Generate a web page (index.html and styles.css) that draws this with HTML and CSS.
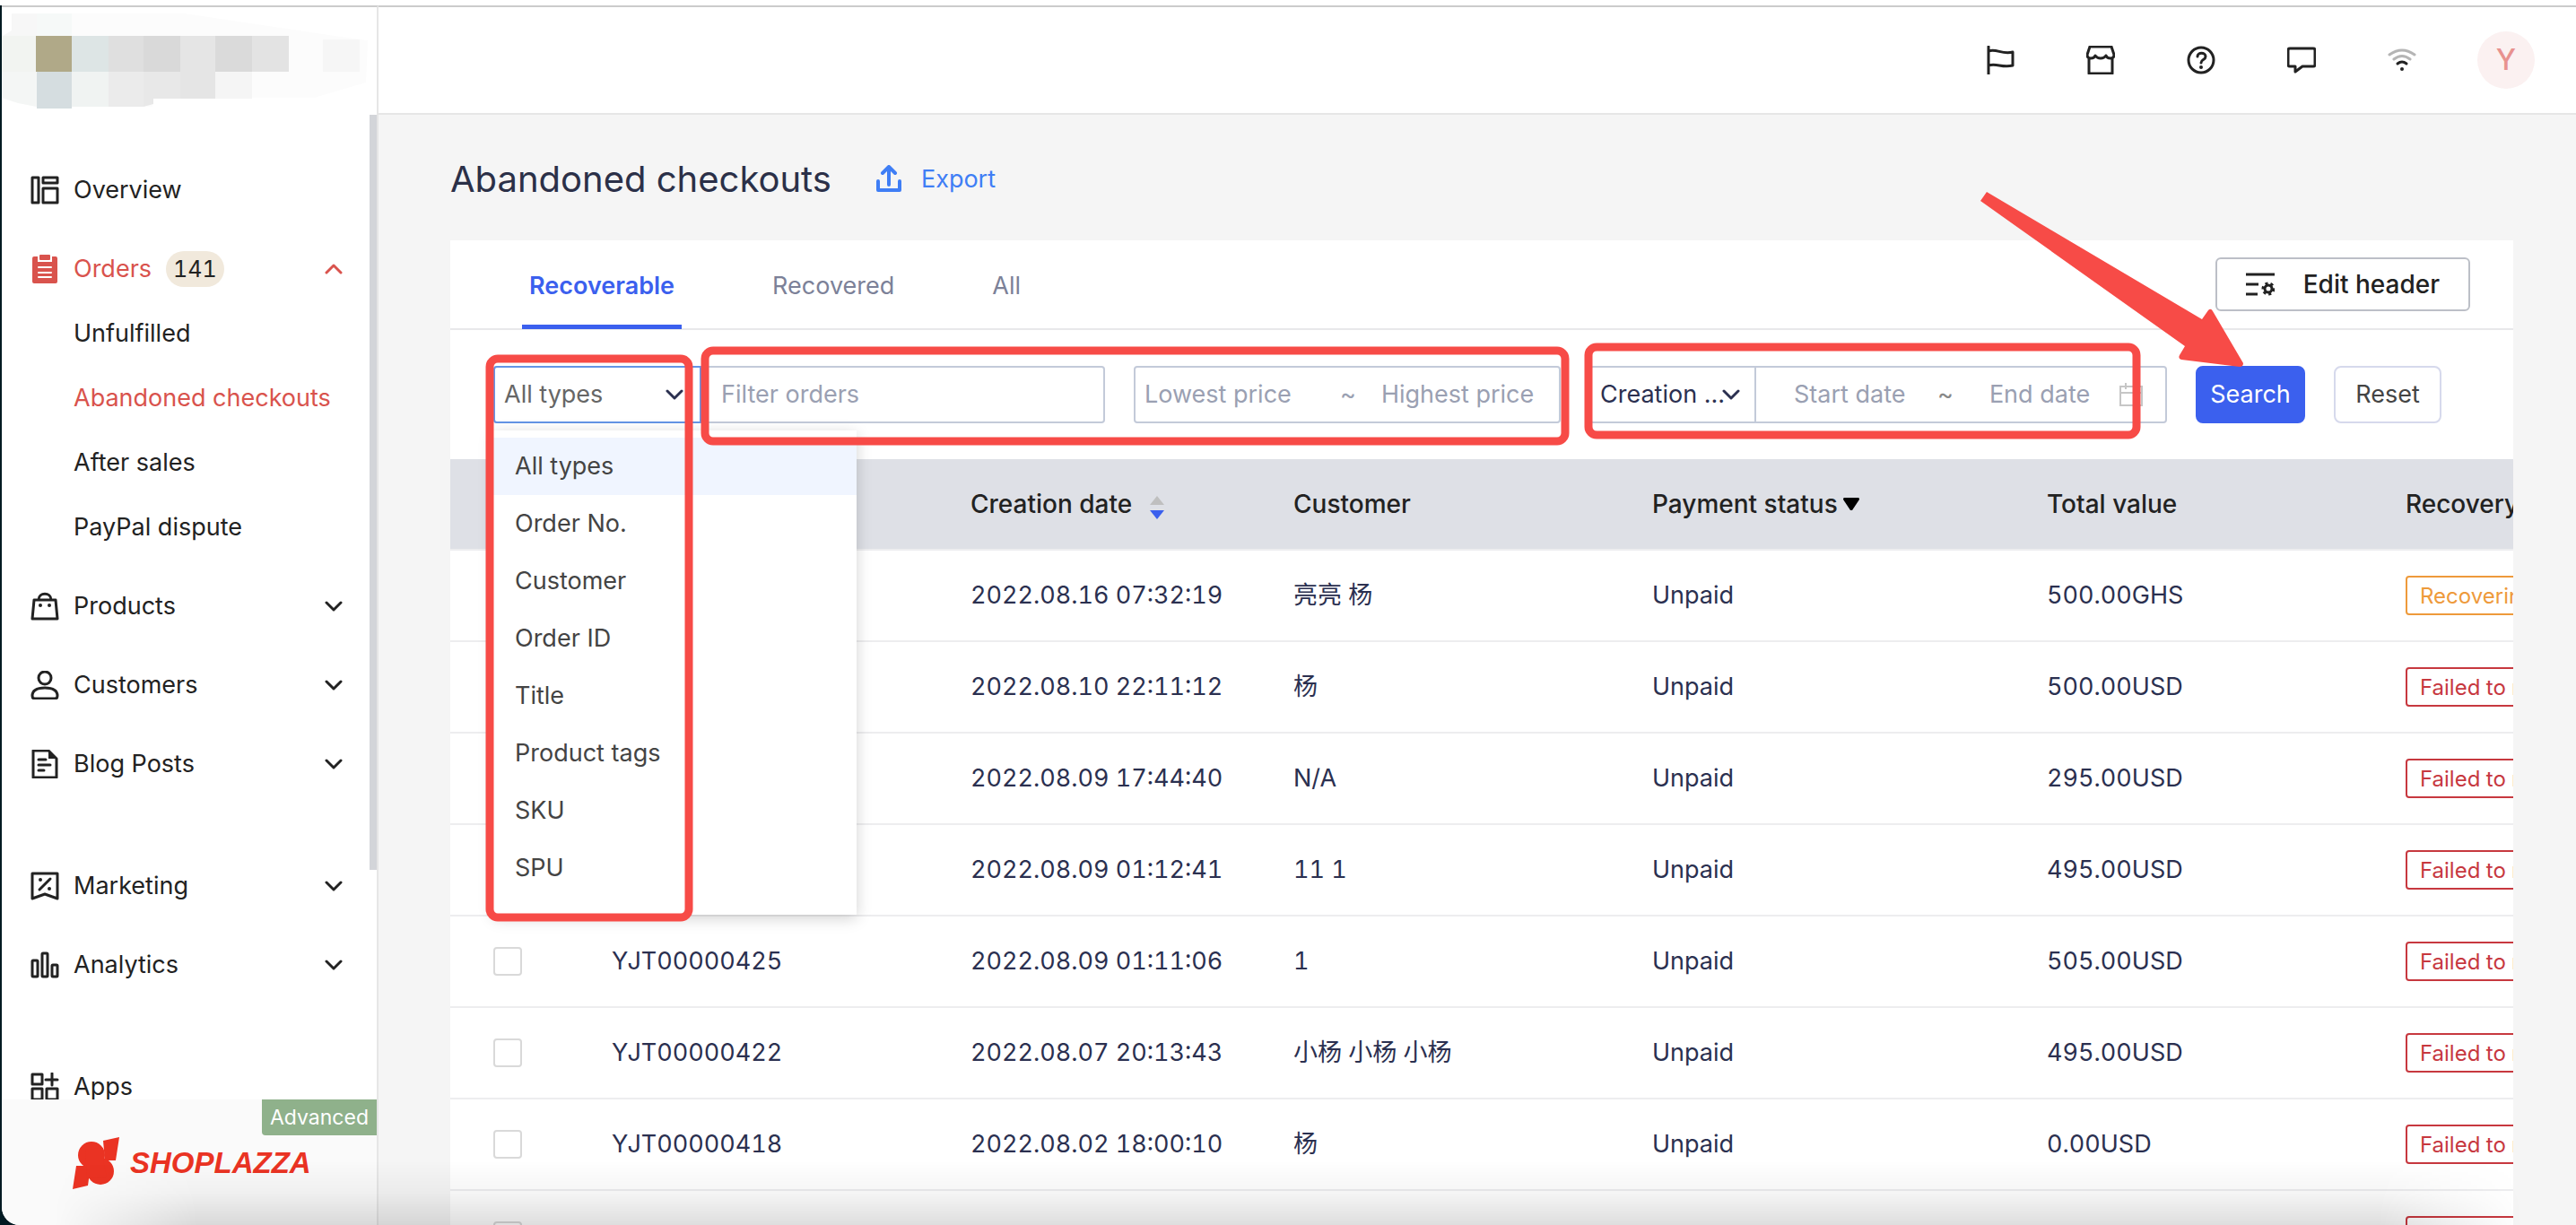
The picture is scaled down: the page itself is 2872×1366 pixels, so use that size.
FILE: index.html
```html
<!DOCTYPE html>
<html lang="en">
<head>
<meta charset="utf-8">
<title>Abandoned checkouts</title>
<link rel="stylesheet" href="styles.css">
</head>
<body>
<svg class="sprite" aria-hidden="true">
  <symbol id="down" viewBox="0 0 20 12"><path d="M2 2l8 8 8-8" fill="none" stroke="currentColor" stroke-width="3" stroke-linecap="round" stroke-linejoin="round"/></symbol>
</svg>
<div class="app">
  <aside class="sidebar">
    <div class="store">
      <svg class="store-name" viewBox="0 8 420 118" role="img" aria-label="Store name hidden">
        <path d="M13 15H205L380 41 410 45 408 92 350 109H170V119H40L0 110V44L13 34z" fill="#fcfcfc"/>
        <path d="M13 15H41V40H3L13 34z" fill="#f7f7f7"/><path d="M41 15H80V40H41z" fill="#f6f9f8"/>
        <path d="M0 40H41V80H0z" fill="#f2f4f1"/><path d="M40 40H80V80H40z" fill="#b0a988"/><path d="M80 40H121V80H80z" fill="#dde5e5"/>
        <path d="M121 40H160V80H121z" fill="#dfdfdf"/><path d="M160 40H201V80H160z" fill="#d9d9d9"/><path d="M201 40H240V110H201z" fill="#e5e5e5"/>
        <path d="M240 40H281V80H240z" fill="#dadada"/><path d="M281 40H322V80H281z" fill="#e3e3e3"/><path d="M360 44H401V80H360z" fill="#f6f6f6"/>
        <path d="M0 80H41V119L20 115 0 108z" fill="#f4f6f5"/><path d="M41 80H80V121H41z" fill="#d5dde0"/><path d="M80 80H121V119H80z" fill="#f0f3f2"/>
        <path d="M121 80H160V119H121z" fill="#ebebeb"/><path d="M160 80H201V110H171V116L160 119z" fill="#e8e8e8"/><path d="M240 80H281V110H240z" fill="#f5f5f5"/>
      </svg>
    </div>
    <nav class="nav" aria-label="Main">
      <a class="item" href="#overview"><svg class="ico" viewBox="0 0 32 32"><path d="M2 2h7v28H2zM14 2h16v6H14zM14 14h16v16H14z"/></svg>Overview</a>
      <div class="group">
        <a class="item active" href="#orders"><svg class="ico" viewBox="0 0 32 32"><path class="solid" d="M4 2h4v6h16V2h4a2 2 0 0 1 2 2v26a2 2 0 0 1-2 2H4a2 2 0 0 1-2-2V4a2 2 0 0 1 2-2z"/><rect class="solid" x="10" y="0" width="12" height="6" rx="1"/><path class="lines" d="M9 14h14M9 20h14M9 25h14"/></svg>Orders<span class="count">141</span><svg class="arrow up"><use href="#down"/></svg></a>
        <a class="sub" href="#unfulfilled">Unfulfilled</a>
        <a class="sub active" href="#abandoned">Abandoned checkouts</a>
        <a class="sub" href="#after">After sales</a>
        <a class="sub" href="#paypal">PayPal dispute</a>
      </div>
      <a class="item" href="#products"><svg class="ico" viewBox="0 0 32 32"><path d="M4 9h24l2 21H2zM9 9c0-9 14-9 14 0"/><circle class="solid" cx="11" cy="15" r="2"/><circle class="solid" cx="21" cy="15" r="2"/></svg>Products<svg class="arrow"><use href="#down"/></svg></a>
      <a class="item" href="#customers"><svg class="ico" viewBox="0 0 32 32"><circle cx="16" cy="8" r="7"/><path d="M2 28c0-6 5-9 14-9s14 3 14 9q0 3-3 3H5q-3 0-3-3z"/></svg>Customers<svg class="arrow"><use href="#down"/></svg></a>
      <a class="item" href="#blog"><svg class="ico" viewBox="0 0 32 32"><path d="M3 1h17l9 9v21H3zM9 11h8M9 17h13M9 23h6"/><path class="solid" d="M20 1v9h9z"/></svg>Blog Posts<svg class="arrow"><use href="#down"/></svg></a>
      <a class="item split" href="#marketing"><svg class="ico" viewBox="0 0 32 32"><path d="M2 2h28v28l-14-5-14 5zM10 20L22 8"/><circle class="solid" cx="11" cy="9" r="2"/><circle class="solid" cx="21" cy="19" r="2"/></svg>Marketing<svg class="arrow"><use href="#down"/></svg></a>
      <a class="item" href="#analytics"><svg class="ico" viewBox="0 0 32 32"><rect x="2" y="11" width="6" height="18" rx="1"/><rect x="13" y="3" width="6" height="26" rx="1"/><rect x="24" y="16" width="6" height="13" rx="1"/></svg>Analytics<svg class="arrow"><use href="#down"/></svg></a>
      <a class="item split" href="#apps"><svg class="ico" viewBox="0 0 32 32"><path d="M2 2h11v11H2zM2 18h11v12H2zM18 18h12v12H18zM24 1v13M17 8h13"/></svg>Apps</a>
    </nav>
    <footer class="plan">
      <span class="badge">Advanced</span>
      <div class="brand">
        <svg class="mark" viewBox="0 0 52 58"><path d="M34 4L52 0 48 26H36zM4 32H20L17 54 0 58z"/><circle cx="21" cy="20" r="15"/><circle cx="31" cy="38" r="15"/><path d="M14 14L34 12V26L38 44 16 46z"/></svg>
        <span>SHOPLAZZA</span>
      </div>
    </footer>
  </aside>

  <div class="page">
    <header class="topbar">
      <button class="tool" aria-label="Guide"><svg class="ico" viewBox="0 0 32 32"><path d="M3 1v31M3 6c9-3 15 4 27 1v15c-12 3-18-3-27 0"/></svg></button>
      <button class="tool" aria-label="Store"><svg class="ico" viewBox="0 0 32 32"><path d="M4 1h24l3 9q0 4-4 4-4 0-5-3-2 3-6 3t-6-3q-1 3-5 3-4 0-4-4zM3 15v16h26V15"/></svg></button>
      <button class="tool" aria-label="Help"><svg class="ico" viewBox="0 0 32 32"><circle cx="16" cy="16" r="14"/><path d="M12 12c0-5 9-5 9 0 0 4-5 3-5 7"/><circle class="solid" cx="16" cy="24" r="2"/></svg></button>
      <button class="tool" aria-label="Messages"><svg class="ico" viewBox="0 0 32 32"><path d="M3 3h26q2 0 2 2v16q0 2-2 2H17l-8 6v-6H3q-2 0-2-2V5q0-2 2-2z"/></svg></button>
      <button class="tool" aria-label="Network"><svg class="ico" viewBox="0 0 32 32"><path class="faint" d="M2 10q14-10 28 0M7 15q9-7 18 0"/><path d="M11 20q5-4 10 0"/><circle class="solid" cx="16" cy="26" r="2"/></svg></button>
      <button class="avatar" aria-label="Account">Y</button>
    </header>

    <main class="content">
      <div class="heading">
        <h1>Abandoned checkouts</h1>
        <button class="export"><svg class="up-icon" viewBox="0 0 28 32"><path d="M14 22V3M7 9l7-7 7 7M2 18v10h24V18"/></svg>Export</button>
      </div>
      <section class="card">
        <div class="tabs">
          <button class="tab on">Recoverable</button>
          <button class="tab">Recovered</button>
          <button class="tab">All</button>
          <button class="edit"><svg class="ico" viewBox="0 0 32 32"><path class="bars" d="M0 5h32M0 16h14M0 27h13"/><circle class="gear" cx="25" cy="21" r="4"/><circle class="teeth" cx="25" cy="21" r="6"/></svg>Edit header</button>
        </div>
        <form class="filters">
          <div class="field search-field">
            <div class="type">
              <button type="button" class="pick" aria-haspopup="listbox" aria-expanded="true">All types<svg class="caret"><use href="#down"/></svg></button>
              <ul class="menu" role="listbox" aria-label="Filter type">
                <li class="opt chosen" role="option" aria-selected="true">All types</li>
                <li class="opt" role="option">Order No.</li>
                <li class="opt" role="option">Customer</li>
                <li class="opt" role="option">Order ID</li>
                <li class="opt" role="option">Title</li>
                <li class="opt" role="option">Product tags</li>
                <li class="opt" role="option">SKU</li>
                <li class="opt" role="option">SPU</li>
              </ul>
            </div>
            <input class="query" type="text" placeholder="Filter orders" aria-label="Filter orders">
          </div>
          <div class="field price">
            <input type="text" placeholder="Lowest price" aria-label="Lowest price"><span>~</span><input type="text" placeholder="Highest price" aria-label="Highest price">
          </div>
          <div class="field dates">
            <button type="button" class="pick by" aria-haspopup="listbox">Creation ...<svg class="caret"><use href="#down"/></svg></button>
            <div class="range">
              <input type="text" placeholder="Start date" aria-label="Start date"><span>~</span><input type="text" placeholder="End date" aria-label="End date">
              <svg class="calendar" viewBox="0 0 28 28"><path d="M2 5h24v21H2zM2 12h24M8 1v7M20 1v7"/></svg>
            </div>
          </div>
          <button type="button" class="btn primary">Search</button>
          <button type="reset" class="btn">Reset</button>
        </form>
        <div class="table-wrap">
          <table>
            <colgroup><col class="c-check"><col class="c-no"><col class="c-date"><col class="c-cust"><col class="c-pay"><col class="c-total"><col class="c-rec"></colgroup>
            <thead><tr>
              <th><input type="checkbox" aria-label="Select all"></th><th>Order No.</th>
              <th>Creation date<svg class="sort" viewBox="0 0 16 26"><path d="M0 10L8 0l8 10z" fill="#bfbfbf"/><path d="M0 16l8 10 8-10z" fill="#3b60ee"/></svg></th>
              <th>Customer</th>
              <th>Payment status<svg class="tri" viewBox="0 0 18 14"><path d="M1 0h16q1 0 1 2l-8 12q-1 1-2 0L0 2q0-2 1-2z"/></svg></th>
              <th>Total value</th><th>Recovery status</th>
            </tr></thead>
            <tbody>
              <tr><td><input type="checkbox" aria-label="Select"></td><td>YJT00000431</td><td>2022.08.16 07:32:19</td><td>亮亮 杨</td><td>Unpaid</td><td>500.00GHS</td><td><span class="tag wait">Recovering</span></td></tr>
              <tr><td><input type="checkbox" aria-label="Select"></td><td>YJT00000429</td><td>2022.08.10 22:11:12</td><td>杨</td><td>Unpaid</td><td>500.00USD</td><td><span class="tag">Failed to recover</span></td></tr>
              <tr><td><input type="checkbox" aria-label="Select"></td><td>YJT00000427</td><td>2022.08.09 17:44:40</td><td>N/A</td><td>Unpaid</td><td>295.00USD</td><td><span class="tag">Failed to recover</span></td></tr>
              <tr><td><input type="checkbox" aria-label="Select"></td><td>YJT00000426</td><td>2022.08.09 01:12:41</td><td>11 1</td><td>Unpaid</td><td>495.00USD</td><td><span class="tag">Failed to recover</span></td></tr>
              <tr><td><input type="checkbox" aria-label="Select"></td><td>YJT00000425</td><td>2022.08.09 01:11:06</td><td>1</td><td>Unpaid</td><td>505.00USD</td><td><span class="tag">Failed to recover</span></td></tr>
              <tr><td><input type="checkbox" aria-label="Select"></td><td>YJT00000422</td><td>2022.08.07 20:13:43</td><td>小杨 小杨 小杨</td><td>Unpaid</td><td>495.00USD</td><td><span class="tag">Failed to recover</span></td></tr>
              <tr><td><input type="checkbox" aria-label="Select"></td><td>YJT00000418</td><td>2022.08.02 18:00:10</td><td>杨</td><td>Unpaid</td><td>0.00USD</td><td><span class="tag">Failed to recover</span></td></tr>
              <tr><td><input type="checkbox" aria-label="Select"></td><td></td><td></td><td></td><td></td><td></td><td><span class="tag">Failed to recover</span></td></tr>
            </tbody>
          </table>
        </div>
      </section>
    </main>
  </div>
</div>
<div class="shade"></div>
<!-- Annotations drawn over the window -->
<svg class="notes" viewBox="0 0 2872 1366" aria-hidden="true">
  <rect x="546" y="400" width="222" height="623" rx="9"/>
  <rect x="786" y="391" width="959" height="101" rx="9"/>
  <rect x="1771" y="387" width="611" height="98" rx="9"/>
  <path d="M2215 214L2455 356 2462 346Q2465 343 2467 347L2501 405Q2501 409 2497 409L2432 401Q2428 400 2430 396L2436 386 2208 224z"/>
</svg>
</body>
</html>
```
FILE: styles.css
```css
* { box-sizing: border-box; }
body {
  margin: 0;
  background: #f5f5f5;
  color: #222;
  font: 27px/32px Inter, "Noto Sans CJK SC", sans-serif;
}
button, input { font: inherit; color: inherit; }
button { background: none; border: 0; padding: 0; cursor: pointer; }
a { color: inherit; text-decoration: none; }
.sprite { position: absolute; width: 0; height: 0; }

.app {
  display: flex;
  height: 100vh;
  overflow: hidden;
  padding: 6px 0 0 2px;
  background: linear-gradient(#fff, #fff) top / 100% 6px no-repeat, #021a22;
}
.sidebar {
  display: flex;
  flex-direction: column;
  flex: 0 0 420px;
  border-top: 2px solid #ccc;
  border-right: 2px solid #e6e6e6;
  border-bottom-left-radius: 20px;
  background: #fff;
  overflow: hidden;
}
.store { flex: 0 0 120px; }
.store-name { display: block; width: 420px; height: 118px; margin-left: -2px; }
.nav {
  flex: 1;
  min-height: 0;
  overflow: hidden;
  display: flex;
  flex-direction: column;
  gap: 16px;
  padding-top: 48px;
  background: linear-gradient(#d3d5d9, #d3d5d9) right top / 8px 842px no-repeat;
}
.item {
  flex: none;
  display: flex;
  align-items: center;
  height: 72px;
  padding: 0 30px 0 32px;
}
.item.split { margin-top: 48px; }
.ico {
  flex: none;
  width: 32px;
  height: 32px;
  fill: none;
  stroke: currentColor;
  stroke-width: 3;
  stroke-linecap: round;
  stroke-linejoin: round;
}
.item .ico { margin-right: 16px; }
.ico .solid { fill: currentColor; stroke: none; }
.ico .lines { stroke: #fff; stroke-width: 2; }
.count {
  margin-left: 16px;
  padding: 0 8px;
  border-radius: 20px;
  background: #f1e9dc;
  color: #222;
  font-size: 25px;
  line-height: 40px;
  font-variant-numeric: tabular-nums;
}
.arrow { width: 20px; height: 12px; margin-left: auto; margin-right: 8px; }
.up { transform: rotate(180deg); }
.active { color: #d9534d; }
.sub { display: block; height: 72px; padding-left: 80px; line-height: 72px; }
.plan { flex: 0 0 140px; background: #fafafa; }
.badge {
  display: block;
  width: 128px;
  margin-left: auto;
  border-bottom-left-radius: 4px;
  background: #8fb18b;
  color: #fff;
  font-size: 23px;
  line-height: 40px;
  text-align: center;
}
.brand {
  display: flex;
  align-items: center;
  gap: 12px;
  height: 62px;
  padding-left: 79px;
  color: #ea3323;
  font: italic bold 33px/60px "Liberation Sans", sans-serif;
}
.mark { width: 52px; height: 58px; fill: currentColor; }

.page { flex: 1; min-width: 0; border-top: 2px solid #ccc; background: #f5f5f5; }
.topbar {
  display: flex;
  align-items: center;
  justify-content: flex-end;
  gap: 80px;
  height: 120px;
  padding-right: 46px;
  background: #fff;
  border-bottom: 2px solid #e6e6e6;
}
.tool { height: 32px; }
.ico .faint { stroke: #b5b5b5; }
.avatar {
  width: 64px;
  height: 64px;
  margin-left: -12px;
  border-radius: 50%;
  background: #fbf1f1;
  color: #e8928f;
  font-size: 32px;
  font-weight: 500;
}
.content { padding: 44px 70px 0 80px; }
.heading { display: flex; align-items: center; gap: 50px; height: 56px; }
h1 { margin: 0; color: #2b3048; font-size: 40px; line-height: 56px; font-weight: 400; }
.export { display: flex; align-items: center; gap: 22px; color: #3f7ef5; }
.up-icon { width: 28px; height: 32px; fill: none; stroke: currentColor; stroke-width: 4; stroke-linejoin: round; stroke-linecap: round; }

.card { margin-top: 40px; background: #fff; }
.tabs {
  display: flex;
  align-items: center;
  height: 100px;
  padding: 0 48px 0 80px;
  border-bottom: 2px solid #e8e8ea;
}
.tab { height: 100px; padding: 8px 8px 0; margin-right: 93px; color: #7c8198; border-bottom: 5px solid transparent; }
.tab.on { color: #3b60ee; border-color: #3b60ee; font-weight: 600; }
.edit {
  display: flex;
  align-items: center;
  justify-content: space-between;
  width: 284px;
  height: 60px;
  margin-left: auto;
  padding: 0 32px;
  border: 2px solid #bcbfc7;
  border-radius: 6px;
  font-size: 28px;
  font-weight: 500;
}
.ico .bars { stroke-linecap: butt; }
.ico .gear { stroke-width: 3; }
.ico .teeth { stroke-width: 3; stroke-dasharray: 3 3; stroke-linecap: butt; }

.filters { display: flex; gap: 32px; padding: 40px 48px; }
.field { display: flex; height: 64px; border: 2px solid #c3cad9; border-radius: 4px; }
.field input { min-width: 0; border: 0; padding: 0; background: none; outline: 0; }
.field input::placeholder { color: #9aa0b2; opacity: 1; }
.search-field { flex: 0 0 682px; border-left: 0; }
.type { position: relative; flex: 0 0 232px; margin: -2px 0; }
.pick { display: flex; align-items: center; justify-content: space-between; }
.type .pick {
  width: 100%;
  height: 64px;
  padding: 0 18px 0 10px;
  border: 2px solid #6495e6;
  border-radius: 4px 0 0 4px;
  color: #666;
}
.caret { width: 20px; height: 12px; color: #2b3050; }
.query { flex: 1; margin-left: 22px; }
.price { flex: 0 0 476px; align-items: center; padding: 0 10px; color: #9aa0b2; }
.price input:first-child { width: 218px; }
.price input:last-child { width: 180px; margin-left: 28px; }
.dates { flex: 0 0 644px; }
.by { width: 184px; padding: 0 16px 0 10px; color: #2b3050; white-space: nowrap; border-right: 2px solid #c3cad9; }
.by .caret { flex: none; margin-left: -6px; }
.range { flex: 1; display: flex; align-items: center; padding: 0 24px 0 42px; color: #888; }
.range input { width: 160px; }
.range input + svg { margin-left: auto; }
.range span { margin-right: 40px; }
.range input:nth-of-type(2) { width: 130px; }
.calendar { width: 28px; height: 28px; fill: none; stroke: #c6c6c6; stroke-width: 2; }
.btn { width: 120px; height: 64px; border: 2px solid #d6d9ec; border-radius: 8px; color: #444; }
.btn.primary { width: 122px; background: #3b60ee; border-color: #3b60ee; color: #fff; }

.menu {
  position: absolute;
  z-index: 2;
  top: 72px;
  left: 0;
  width: 405px;
  margin: 0;
  padding: 8px 0 20px;
  list-style: none;
  background: #fff;
  box-shadow: 0 4px 16px rgba(0, 0, 0, .18);
  color: #444;
}
.opt { height: 64px; padding-left: 24px; line-height: 64px; }
.chosen { background: #f0f5ff; }

.table-wrap { overflow: hidden; }
table { width: 2600px; table-layout: fixed; border-collapse: separate; border-spacing: 0; font-variant-numeric: tabular-nums; }
.c-check { width: 148px; }
.c-no { width: 400px; }
.c-date { width: 360px; }
.c-cust { width: 400px; }
.c-pay { width: 440px; }
.c-total { width: 400px; }
th, td { height: 102px; padding: 0 0 0 32px; border-bottom: 2px solid #ededef; text-align: left; white-space: nowrap; }
th:first-child, td:first-child { padding-left: 48px; }
th { background: #dee0e6; font-size: 28px; font-weight: 500; }
td { color: #2b3050; }
table input {
  appearance: none;
  display: block;
  width: 32px;
  height: 32px;
  margin: 0;
  border: 2px solid #d9d9d9;
  border-radius: 4px;
  background: #fff;
}
.sort { width: 16px; height: 26px; margin-left: 20px; vertical-align: -7px; }
.tri { width: 18px; height: 14px; margin-left: 6px; vertical-align: 3px; }
.tag {
  display: inline-block;
  height: 44px;
  padding: 0 14px;
  border: 2px solid #c7383f;
  border-radius: 4px;
  color: #c7383f;
  font-size: 24px;
  line-height: 42px;
  vertical-align: middle;
}
.tag.wait { border-color: #ee9a3b; color: #ee9a3b; }

.shade {
  position: fixed;
  inset: auto 60px 0;
  height: 72px;
  background: linear-gradient(rgba(0, 0, 0, 0), rgba(0, 0, 0, .04) 50%, rgba(0, 0, 0, .13));
  -webkit-mask: linear-gradient(90deg, transparent, #000 160px, #000 calc(100% - 160px), transparent);
  mask: linear-gradient(90deg, transparent, #000 160px, #000 calc(100% - 160px), transparent);
  pointer-events: none;
}
.notes { position: absolute; top: 0; left: 0; width: 2872px; height: 1366px; pointer-events: none; z-index: 5; }
.notes rect { fill: none; stroke: #f74b47; stroke-width: 9; }
.notes path { fill: #f74b47; }
```
